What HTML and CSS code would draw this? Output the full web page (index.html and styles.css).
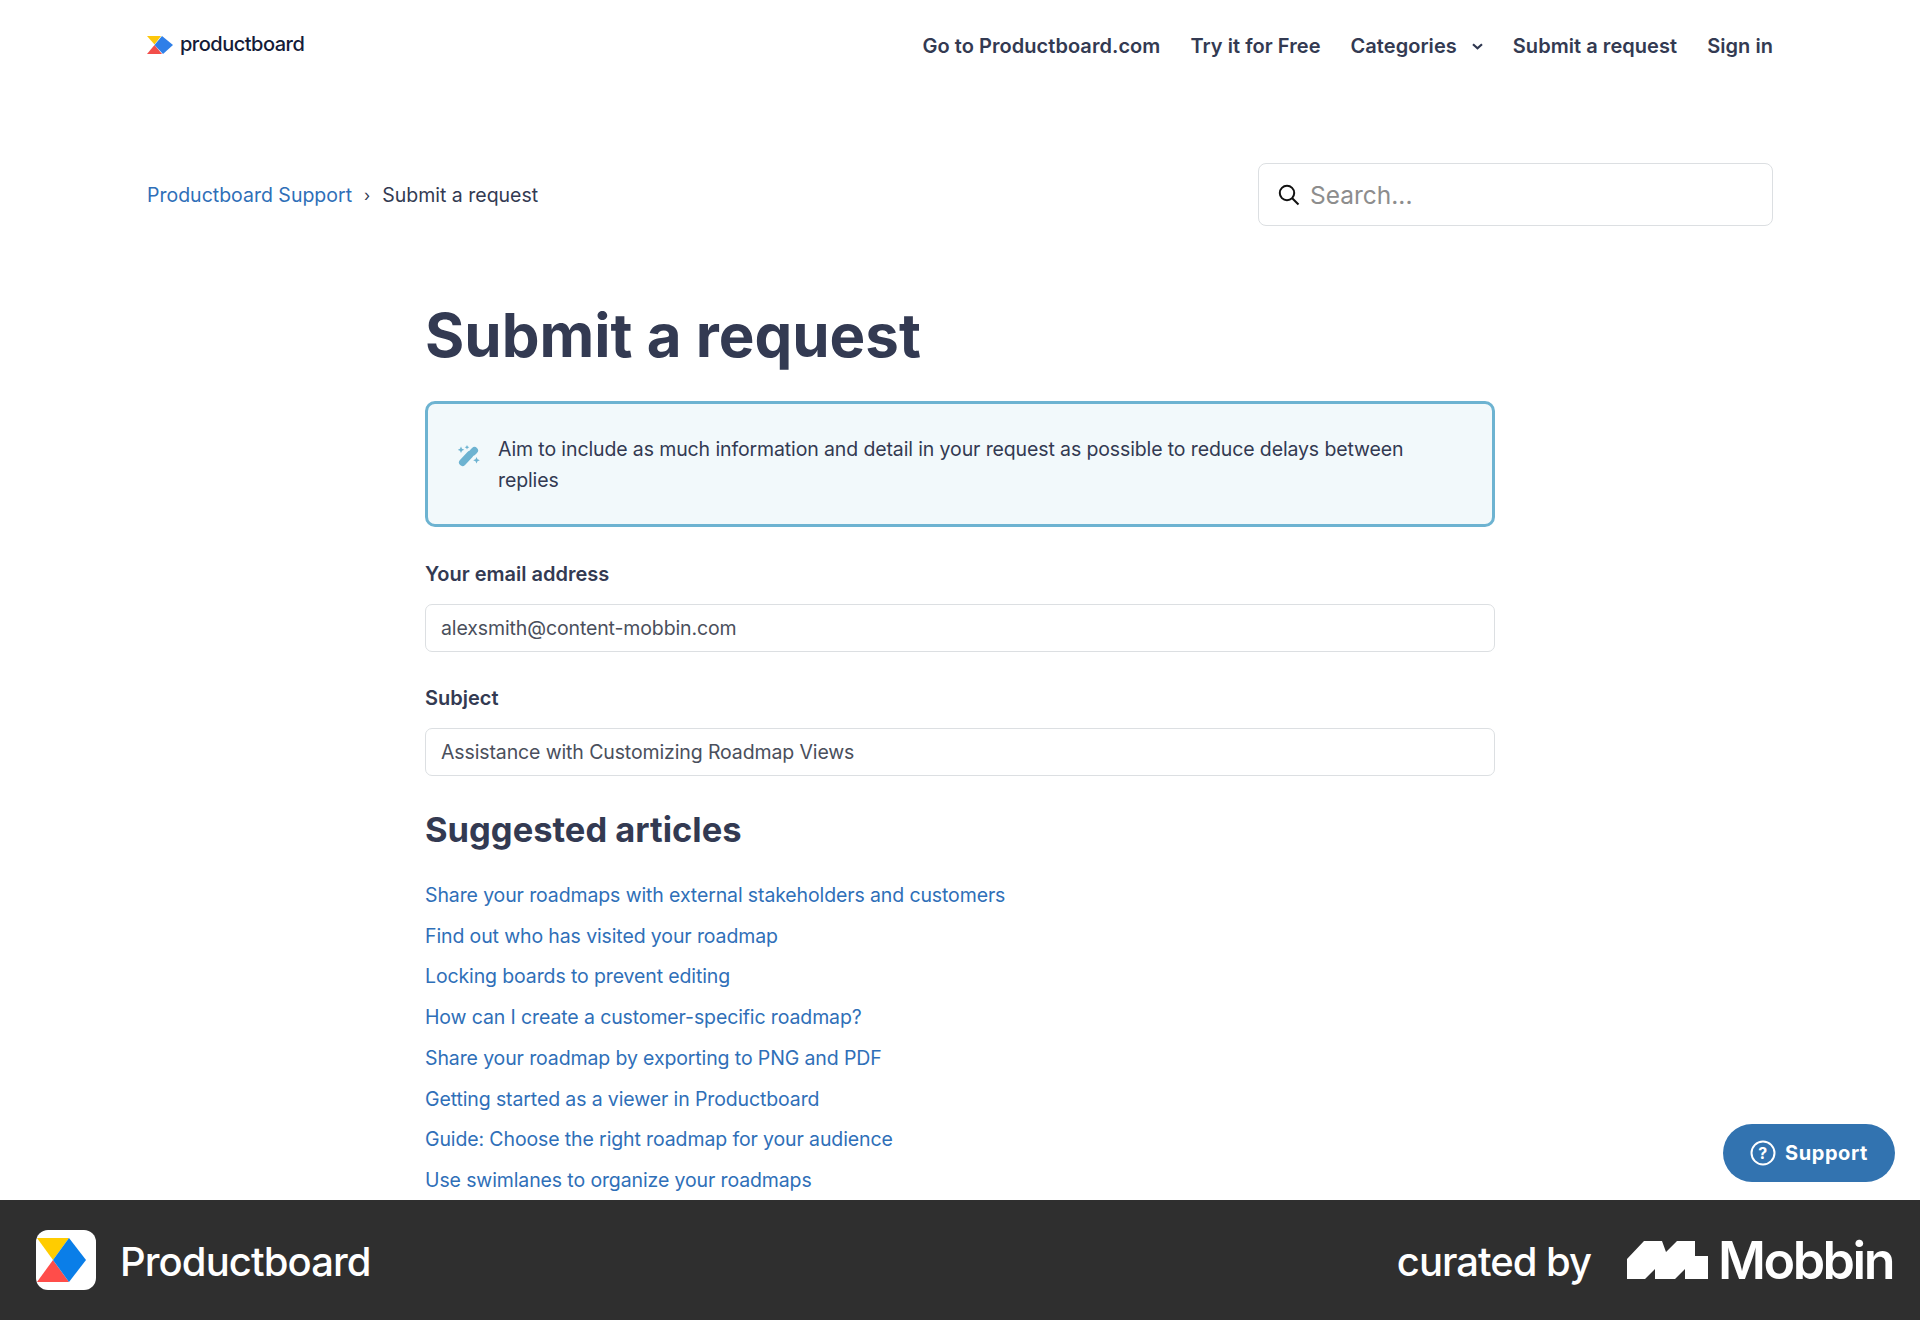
FILE: index.html
```html
<!DOCTYPE html>
<html lang="en">
<head>
  <meta charset="UTF-8">
  <title>Submit a request – Productboard Support</title>
  <link rel="stylesheet" href="styles.css">
</head>
<body>
  <div class="page">
    <header class="topbar">
      <a class="logo">
        <svg class="logo-mark" width="26" height="18" viewBox="0 0 26 18">
          <polygon points="0,0 14,0 7.500,8.500" fill="#fdc70c"/>
          <polygon points="0,18 7.500,9 15,18" fill="#f24e4a"/>
          <polygon points="15,0 26,9 16,18 7.500,9" fill="#2f7fe8"/>
        </svg>
        <span>productboard</span>
      </a>
      <nav class="nav">
        <a>Go to Productboard.com</a>
        <a>Try it for Free</a>
        <a class="nav-drop">Categories
          <svg width="11" height="7" viewBox="0 0 11 7"><path d="M1 1.200l4.500 4 4.500-4" fill="none" stroke="#2f3750" stroke-width="2.200"/></svg>
        </a>
        <a>Submit a request</a>
        <a>Sign in</a>
      </nav>
    </header>

    <div class="subbar">
      <div class="crumbs">
        <a>Productboard Support</a>
        <span class="crumb-sep">›</span>
        <span>Submit a request</span>
      </div>
      <div class="search">
        <svg width="22" height="22" viewBox="0 0 22 22"><circle cx="9" cy="9" r="7.200" fill="none" stroke="#111" stroke-width="2"/><path d="M14.200 14.200l6.300 6.300" stroke="#111" stroke-width="2"/></svg>
        <span>Search...</span>
      </div>
    </div>

    <main class="main">
      <h1>Submit a request</h1>
      <div class="notice">
        <svg class="notice-icon" width="22" height="22" viewBox="0 0 22 22">
          <path d="M4.500 17.500l7.500-8" stroke="#6db3d1" stroke-width="7" stroke-linecap="round"/>
          <path d="M15 7l1.500-1.500" stroke="#6db3d1" stroke-width="7" stroke-linecap="round"/>
          <path d="M3 1.500l1 2.300 2.300 1-2.300 1-1 2.300-1-2.300-2.300-1 2.300-1zM9 0l.7 1.600 1.600.7-1.600.7L9 4.600l-.7-1.600-1.600-.7 1.600-.7zM18.500 12l1 2.300 2.300 1-2.300 1-1 2.300-1-2.300-2.300-1 2.300-1z" fill="#6db3d1"/>
        </svg>
        <p>Aim to include as much information and detail in your request as possible to reduce delays between replies</p>
      </div>

      <label class="field-label">Your email address</label>
      <div class="input">alexsmith@content-mobbin.com</div>

      <label class="field-label">Subject</label>
      <div class="input">Assistance with Customizing Roadmap Views</div>

      <h2>Suggested articles</h2>
      <ul class="articles">
        <li><a>Share your roadmaps with external stakeholders and customers</a></li>
        <li><a>Find out who has visited your roadmap</a></li>
        <li><a>Locking boards to prevent editing</a></li>
        <li><a>How can I create a customer-specific roadmap?</a></li>
        <li><a>Share your roadmap by exporting to PNG and PDF</a></li>
        <li><a>Getting started as a viewer in Productboard</a></li>
        <li><a>Guide: Choose the right roadmap for your audience</a></li>
        <li><a>Use swimlanes to organize your roadmaps</a></li>
      </ul>
    </main>

    <button class="support">
      <svg width="26" height="26" viewBox="0 0 26 26"><circle cx="13" cy="13" r="11.500" fill="none" stroke="#fff" stroke-width="2"/><text x="13" y="18.500" text-anchor="middle" class="support-q">?</text></svg>
      Support
    </button>
  </div>

  <footer class="credit">
    <div class="credit-app">
      <div class="app-icon">
        <svg width="56" height="44" viewBox="0 0 56 44">
          <polygon points="0,0 32,0 16,22" fill="#ffcc00"/>
          <polygon points="0,44 16,22 32,44" fill="#ff4d4a"/>
          <polygon points="32,0 49,22 32,44 16,22" fill="#0a7ee8"/>
        </svg>
      </div>
      <span>Productboard</span>
    </div>
    <div class="credit-by">
      <span class="curated">curated by</span>
      <div class="mobbin">
        <svg width="81" height="38" viewBox="0 0 81 38">
          <path d="M0 18L17 0H35L39 11L50 0H68V15H81V38H58V28L48 38H28V28L18 38H0Z" fill="#fff"/>
        </svg>
        <span>Mobbin</span>
      </div>
    </div>
  </footer>
</body>
</html>
```

FILE: styles.css
```css
:root {
  --ink: #333a52;
  --link: #2f6fb8;
  --line: #dcdfe2;
}

* {
  box-sizing: border-box;
}

html, body {
  height: 100%;
}

body {
  margin: 0;
  font-family: Inter, "Liberation Sans", sans-serif;
  color: var(--ink);
  background: #fff;
  display: flex;
  flex-direction: column;
  overflow: hidden;
}

.page {
  flex: 1;
  min-height: 0;
  overflow: hidden;
  padding: 0 147px;
}

.topbar {
  height: 92px;
  display: flex;
  align-items: center;
  justify-content: space-between;
}

.logo {
  display: flex;
  align-items: center;
  gap: 7px;
  font-size: 20px;
  font-weight: 500;
  color: #141b38;
  letter-spacing: -0.5px;
  margin-top: -4px;
}

.logo-mark {
  margin-top: 2px;
}

.nav {
  display: flex;
  gap: 30px;
  font-size: 20px;
  font-weight: 600;
  letter-spacing: 0.05px;
}

.nav-drop {
  display: flex;
  align-items: center;
  gap: 15px;
}

.subbar {
  margin-top: 71px;
  height: 63px;
  display: flex;
  align-items: center;
  justify-content: space-between;
}

.crumbs {
  display: flex;
  align-items: center;
  gap: 12px;
  font-size: 19.500px;
}

.crumbs a {
  color: var(--link);
}

.crumb-sep {
  font-size: 16px;
}

.search {
  width: 515px;
  height: 63px;
  border: 1px solid var(--line);
  border-radius: 8px;
  display: flex;
  align-items: center;
  gap: 10px;
  padding: 0 19px;
  font-size: 24.500px;
  color: #8d8d8d;
}

.main {
  width: 1070px;
  margin: 0 auto;
}

h1 {
  margin: 70px 0 0;
  font-size: 60px;
  line-height: 78px;
  font-weight: 700;
}

.notice {
  margin-top: 27px;
  height: 126px;
  border: 3px solid #6db3d1;
  border-radius: 10px;
  background: #f2f9fb;
  display: flex;
  padding: 30px 80px 0 30px;
  gap: 18px;
}

.notice-icon {
  margin-top: 11px;
  flex-shrink: 0;
}

.notice p {
  margin: 0;
  font-size: 19.500px;
  line-height: 31px;
  letter-spacing: -0.120px;
}

.field-label {
  display: block;
  margin-top: 34px;
  font-size: 20px;
  line-height: 26px;
  font-weight: 600;
}

.input {
  margin-top: 17px;
  height: 48px;
  border: 1px solid var(--line);
  border-radius: 7px;
  padding: 0 15px;
  display: flex;
  align-items: center;
  font-size: 19.500px;
  letter-spacing: -0.120px;
  color: #4a4f5c;
}

.input + .field-label {
  margin-top: 33px;
}

h2 {
  margin: 32px 0 0;
  font-size: 34.500px;
  line-height: 44px;
  font-weight: 700;
}

.articles {
  list-style: none;
  margin: 23px 0 0;
  padding: 0;
  font-size: 19.500px;
  letter-spacing: -0.120px;
  line-height: 40.700px;
  color: var(--link);
}

.support {
  position: fixed;
  right: 25px;
  bottom: 138px;
  width: 172px;
  height: 58px;
  border: 0;
  border-radius: 29px;
  background: #3273b0;
  color: #fff;
  font-family: Inter, "Liberation Sans", sans-serif;
  font-size: 20px;
  font-weight: 700;
  letter-spacing: 0.6px;
  display: flex;
  align-items: center;
  justify-content: center;
  gap: 9px;
}

.support-q {
  font-size: 16px;
  font-weight: 700;
  fill: #fff;
}

.credit {
  height: 120px;
  flex-shrink: 0;
  background: #2f2f2f;
  color: #fff;
  display: flex;
  align-items: center;
  justify-content: space-between;
  padding: 0 27px 0 36px;
}

.credit-app {
  display: flex;
  align-items: center;
  gap: 24px;
  font-size: 40px;
  font-weight: 500;
  letter-spacing: -0.900px;
}

.credit-app span {
  margin-top: 3px;
}

.app-icon {
  width: 60px;
  height: 60px;
  background: #fff;
  border-radius: 12px;
  display: flex;
  align-items: center;
  justify-content: flex-end;
  padding-right: 3px;
}

.credit-by {
  display: flex;
  align-items: center;
  gap: 36px;
}

.curated {
  font-size: 40px;
  font-weight: 500;
  letter-spacing: -1px;
  margin-top: 3px;
}

.mobbin {
  display: flex;
  align-items: center;
  gap: 10px;
  font-size: 52px;
  font-weight: 600;
  letter-spacing: -2.500px;
}
```
